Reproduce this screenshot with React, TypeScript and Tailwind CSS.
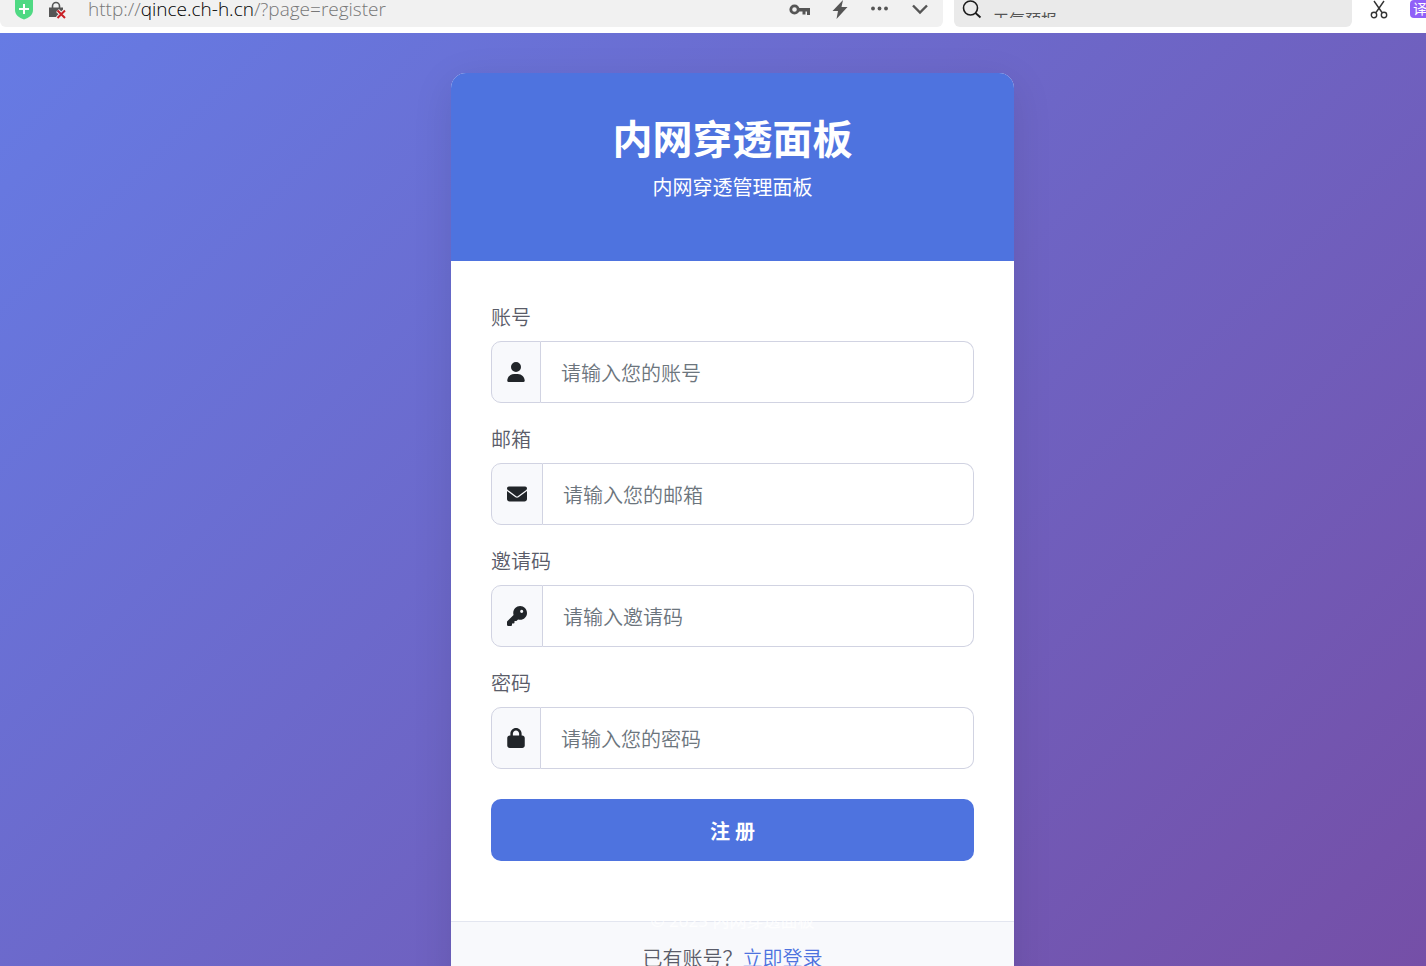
import React from 'react';
import { FaUser, FaEnvelope, FaKey, FaLock } from 'react-icons/fa6';

interface FieldProps {
  id: string;
  label: string;
  placeholder: string;
  type?: string;
  icon: React.ReactNode;
}

const Field: React.FC<FieldProps> = ({ id, label, placeholder, type = 'text', icon }) => {
  return (
    <div>
      <label htmlFor={id} className="block mb-[6px] leading-[34px] text-[#5a5c69]">
        {label}
      </label>
      <div className="flex h-[62px]">
        <span className="flex items-center px-[15px] bg-[#f8f9fc] border border-[#d1d3e2] rounded-l-[10px] text-[#212529]">
          {icon}
        </span>
        <input
          id={id}
          type={type}
          placeholder={placeholder}
          className="flex-1 min-w-0 px-5 pt-1 bg-white border border-l-0 border-[#d1d3e2] rounded-r-[10px] outline-none placeholder:text-[#6c757d]"
        />
      </div>
    </div>
  );
};

const BrowserBar: React.FC = () => {
  return (
    <header className="flex h-[33px] shrink-0 items-start bg-white overflow-hidden">
      <div className="flex h-[27px] flex-1 min-w-0 items-start rounded-b-md bg-[#f1f1f1] pl-[14px] pr-[13px]">
        <svg className="w-5 h-5 shrink-0" viewBox="0 0 20 20">
          <path d="M1 -3h18v13c0 5-4 7.500-9 9.500C5 17.500 1 15 1 10z" fill="#4fd983" />
          <path d="M10 4v10M5 9h10" stroke="#fff" strokeWidth="2" />
        </svg>
        <svg className="ml-[14px] w-5 h-5 shrink-0" viewBox="0 0 20 20">
          <path d="M4.500 8V6a3.500 3.500 0 0 1 7 0v2" fill="none" stroke="#555" strokeWidth="1.600" />
          <path d="M1 7.500h14V17H1z" fill="#555" />
          <path d="M9.500 10.500l7.500 7.500M17 10.500L9.500 18" stroke="#f1f1f1" strokeWidth="4" />
          <path d="M9.500 10.500l7.500 7.500M17 10.500L9.500 18" stroke="#c92027" strokeWidth="2" />
        </svg>
        <span className="ml-5 flex-1 whitespace-nowrap text-[19px] leading-[18px] font-[330] text-[#787878]">
          http://<span className="text-black">qince.ch-h.cn</span>/?page=register
        </span>
        <div className="flex gap-5 text-[#555]">
          <button aria-label="密码" className="w-5 h-5">
            <svg viewBox="0 0 20 20" className="w-5 h-5 overflow-visible">
              <circle cx="4.500" cy="9.500" r="3.700" fill="none" stroke="currentColor" strokeWidth="2.800" />
              <path d="M9 8h11v7h-3v-3.500h-1.500V14.500h-3v-3H9z" fill="currentColor" />
            </svg>
          </button>
          <button aria-label="加速" className="w-5 h-5">
            <svg viewBox="0 0 20 20" className="w-5 h-5 overflow-visible">
              <path d="M13 0L2.500 11h5.500L6.500 19 17.500 7h-6z" fill="currentColor" />
            </svg>
          </button>
          <button aria-label="更多" className="w-5 h-5">
            <svg viewBox="0 0 20 20" className="w-5 h-5" fill="currentColor">
              <circle cx="3" cy="8.500" r="1.900" />
              <circle cx="9.500" cy="8.500" r="1.900" />
              <circle cx="16" cy="8.500" r="1.900" />
            </svg>
          </button>
          <button aria-label="展开" className="w-5 h-5">
            <svg viewBox="0 0 20 20" className="w-5 h-5">
              <path d="M3 5.500l7 7 7-7" fill="none" stroke="currentColor" strokeWidth="2.400" />
            </svg>
          </button>
        </div>
      </div>
      <div className="ml-[11px] flex h-[27px] w-[398px] items-start rounded-b-md bg-[#eaeaea] pl-2">
        <svg className="w-5 h-5 shrink-0" viewBox="0 0 20 20">
          <circle cx="8.500" cy="8" r="7" fill="none" stroke="#1a1a1a" strokeWidth="1.600" />
          <path d="M13.500 13l5 4.500" stroke="#1a1a1a" strokeWidth="1.800" />
        </svg>
        <div className="ml-[11px] flex-1 h-[18px] overflow-hidden">
          <input
            aria-label="搜索"
            placeholder="天气预报"
            className="block w-full h-9 pt-1 bg-transparent text-[16px] outline-none placeholder:text-[#555]"
          />
        </div>
      </div>
      <div className="flex w-[74px] pl-[17px] gap-[21px]">
        <button aria-label="截图" className="w-5 h-5 shrink-0">
          <svg viewBox="0 0 20 20" className="w-5 h-5" fill="none" stroke="#333" strokeWidth="1.400">
            <path d="M5 1l8 11.500M15 1L7 12.500" />
            <circle cx="5" cy="15" r="2.700" />
            <circle cx="15" cy="15" r="2.700" />
          </svg>
        </button>
        <button className="w-5 h-[18px] shrink-0 rounded-sm bg-[#9060f8] text-white text-[14px] leading-[18px]">
          译
        </button>
      </div>
    </header>
  );
};

const App: React.FC = () => {
  return (
    <div className="flex h-screen flex-col overflow-hidden font-['Open_Sans','Noto_Sans_CJK_SC',sans-serif] text-[20px]">
      <BrowserBar />
      <main className="relative flex-1 overflow-hidden pl-[39px] pt-10 bg-[linear-gradient(135deg,#667be4_0%,#754fa7_100%)]">
        <section className="mx-auto max-w-[563px] overflow-hidden rounded-[15px] bg-white shadow-[0_10px_40px_rgba(0,0,0,0.1)]">
          <div className="h-[188px] bg-[#4e73df] pt-10 text-center text-white">
            <h1 className="text-[40px] leading-[52px] font-bold">内网穿透面板</h1>
            <p className="mt-2 leading-[30px]">内网穿透管理面板</p>
          </div>
          <form className="px-10 pt-10 pb-[60px]" onSubmit={(e) => e.preventDefault()}>
            <div className="flex flex-col gap-5 font-[350]">
              <Field
                id="username"
                label="账号"
                placeholder="请输入您的账号"
                icon={<FaUser className="w-[18px] h-5" />}
              />
              <Field
                id="email"
                label="邮箱"
                placeholder="请输入您的邮箱"
                type="email"
                icon={<FaEnvelope className="w-5 h-5" />}
              />
              <Field
                id="invite"
                label="邀请码"
                placeholder="请输入邀请码"
                icon={<FaKey className="w-5 h-5" />}
              />
              <Field
                id="password"
                label="密码"
                placeholder="请输入您的密码"
                type="password"
                icon={<FaLock className="w-[18px] h-5" />}
              />
            </div>
            <button
              type="submit"
              className="mt-[30px] h-[62px] w-full rounded-[10px] bg-[#4e73df] pt-1 font-bold text-white"
            >
              注 册
            </button>
          </form>
          <div className="border-t border-[#e3e6f0] bg-[#f8f9fc] py-5 text-center leading-[34px] font-[350] text-[#5a5c69]">
            已有账号？
            <a href="#login" className="text-[#4e73df]">
              立即登录
            </a>
          </div>
        </section>
        <footer className="absolute bottom-8 left-[39px] right-0 text-center text-[17px] leading-[27px] text-white/80">
          © 2025 内网穿透面板
        </footer>
      </main>
    </div>
  );
};

export default App;
